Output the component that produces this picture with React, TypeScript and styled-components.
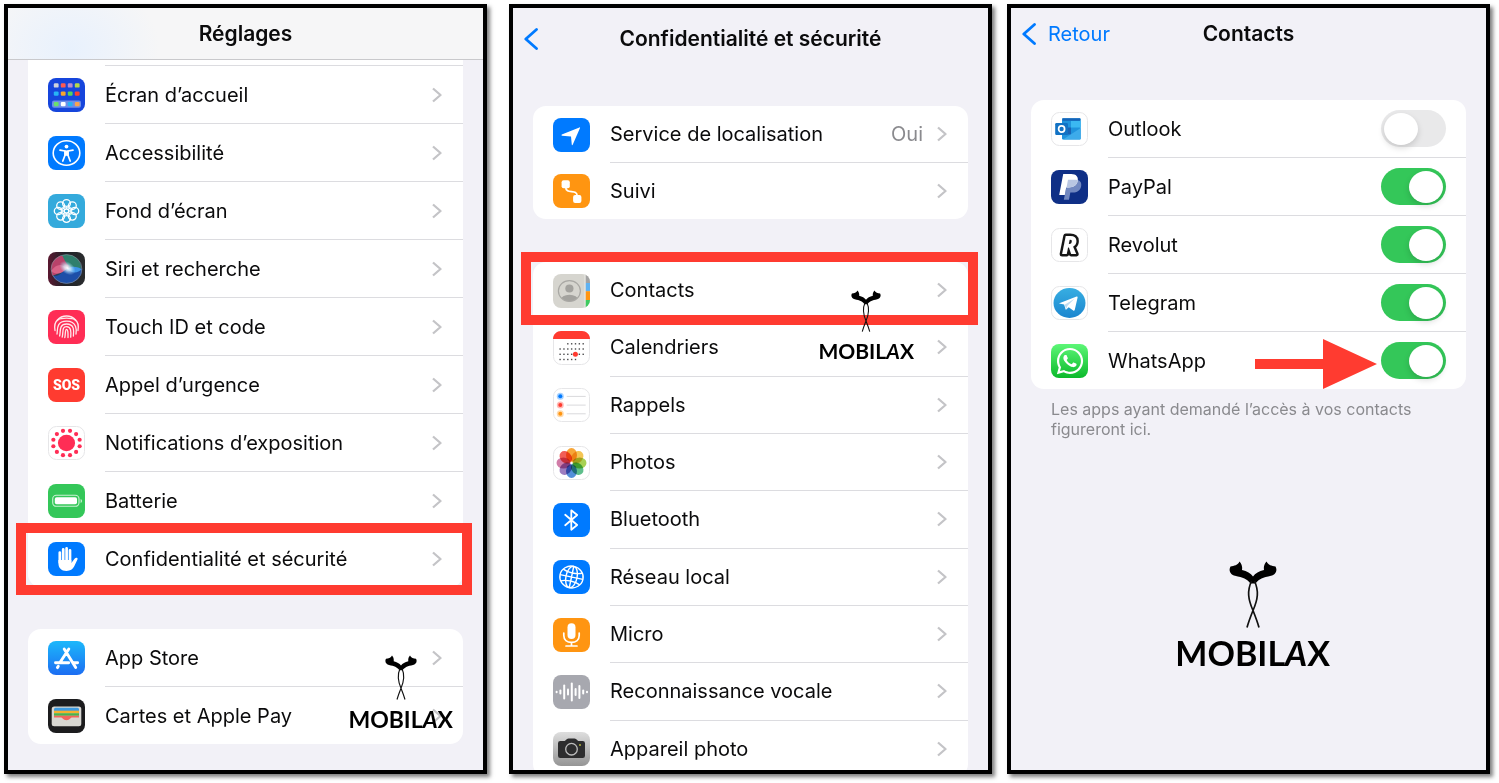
import React from "react";
import styled, { createGlobalStyle } from "styled-components";
import { FaWhatsapp } from "react-icons/fa";

const GlobalStyle = createGlobalStyle`
  *, *::before, *::after { box-sizing: border-box; }
  body {
    margin: 0;
    background: #fff;
    color: #0b0b0c;
    font-family: Inter, "Liberation Sans", sans-serif;
  }
`;

const Page = styled.main`
  display: flex;
  padding: 4px 9px 9px 4px;
`;

const Screen = styled.section<{ $gap?: number }>`
  position: relative;
  flex: 1 1 0;
  min-width: 0;
  height: calc(100vh - 13px);
  min-height: 600px;
  margin-left: ${(p) => p.$gap ?? 0}px;
  display: flex;
  flex-direction: column;
  overflow: hidden;
  background: #f2f1f7;
  border: 4px solid #000;
  box-shadow: 3px 3px 4px rgba(0, 0, 0, 0.5);
`;

const Header = styled.header<{ $height: number; $bar?: boolean }>`
  flex: none;
  height: ${(p) => p.$height}px;
  padding: 0 11px;
  display: grid;
  grid-template-columns: 1fr auto 1fr;
  align-items: center;
  border-bottom: ${(p) => (p.$bar ? "1px solid #c9c9cc" : "0")};
  background: ${(p) =>
    p.$bar
      ? "radial-gradient(ellipse 90px 70px at 62px 40px, #e8f1fd, rgba(246, 246, 247, 0)), #f6f6f7"
      : "transparent"};
`;

const Title = styled.h1`
  grid-column: 2;
  margin: 0;
  font-size: 21px;
  line-height: 24px;
  font-weight: 600;
  white-space: nowrap;
`;

const Back = styled.button`
  justify-self: start;
  display: flex;
  align-items: center;
  gap: 12px;
  padding: 0;
  border: 0;
  background: none;
  color: #007aff;
  font: inherit;
  font-size: 20px;
  line-height: 24px;
`;

const List = styled.ul<{ $top?: number; $continued?: boolean; $bleed?: boolean }>`
  flex: ${(p) => (p.$bleed ? "1 0 auto" : "none")};
  display: flex;
  flex-direction: column;
  margin: ${(p) => p.$top ?? 0}px 20px ${(p) => (p.$bleed ? -7 : 0)}px;
  padding: 0;
  list-style: none;
  background: #fff;
  border-radius: ${(p) => (p.$continued ? "0 0 13px 13px" : "13px")};
`;

const PreviousRowEnd = styled.li`
  height: 6px;
  margin-left: 77px;
  border-bottom: 1px solid #dcdce0;
`;

const Item = styled.li<{ $height: number; $grow?: boolean }>`
  position: relative;
  display: flex;
  flex: ${(p) => (p.$grow ? 1 : 0)} 0 ${(p) => p.$height}px;
  &:last-child {
    flex-basis: ${(p) => p.$height - 1}px;
  }
`;

const rowLayout = `
  flex: 1;
  display: flex;
  align-items: stretch;
  gap: 20px;
  padding-left: 20px;
  color: inherit;
  text-decoration: none;
`;
const RowLink = styled.a`${rowLayout}`;
const RowLabel = styled.label`${rowLayout}`;

const IconBox = styled.span`
  flex: none;
  width: 37px;
  display: flex;
  align-items: center;
`;

const RowBody = styled.span<{ $end: number }>`
  flex: 1;
  display: flex;
  align-items: center;
  justify-content: space-between;
  padding-right: ${(p) => p.$end}px;
  font-size: 20px;
  line-height: 24px;
  white-space: nowrap;
  border-bottom: 1px solid #dcdce0;
  li:last-child & {
    border-bottom: 0;
  }
`;

const Trailing = styled.span`
  display: flex;
  align-items: center;
  gap: 14px;
  color: #8a8a8e;
`;

const Highlight = styled.span<{ $edges: string }>`
  position: absolute;
  inset: ${(p) => p.$edges};
  z-index: 1;
  border: 10px solid #ff3b30;
  pointer-events: none;
`;

const Toggle = styled.input`
  appearance: none;
  flex: none;
  width: 65px;
  height: 37px;
  margin: 0;
  padding: 2px 3px;
  display: flex;
  align-items: center;
  border-radius: 19px;
  background: #e9e9ea;
  &::before {
    content: "";
    width: 34px;
    height: 32px;
    border-radius: 50%;
    background: #fff;
    box-shadow: 0 3px 6px rgba(0, 0, 0, 0.15);
  }
  &:checked {
    justify-content: flex-end;
    background: #34c759;
  }
`;

const Pointer = styled.svg`
  position: absolute;
  right: 89px;
  top: 7px;
`;

const Note = styled.p`
  margin: 10px 40px 0;
  font-size: 16px;
  line-height: 20px;
  color: #8a8a8e;
`;

const Mark = styled.div<{ $right: number; $bottom: number; $font: number }>`
  position: absolute;
  z-index: 2;
  right: ${(p) => p.$right}px;
  bottom: ${(p) => p.$bottom}px;
  display: flex;
  flex-direction: column;
  align-items: center;
  gap: 8px;
  color: #000;
  font-family: Lato, "Liberation Sans", sans-serif;
  font-weight: 700;
  font-size: ${(p) => p.$font}px;
  line-height: 1;
  pointer-events: none;
`;

const Chevron = () => (
  <svg width="10" height="16" viewBox="0 0 10 16" fill="none" stroke="#c4c4c7" strokeWidth="2.3" aria-hidden="true">
    <path d="M1 1.5 8.5 8 1 14.5" strokeLinejoin="round" />
  </svg>
);

const BackChevron = () => (
  <svg width="14" height="22" viewBox="0 0 14 22" fill="none" stroke="#007aff" strokeWidth="2.8" strokeLinecap="round" strokeLinejoin="round" aria-hidden="true">
    <path d="M12.5 1.5 1.8 11l10.7 9.5" />
  </svg>
);

const Tile = ({ fill, outlined, children }: { fill: string; outlined?: boolean; children?: React.ReactNode }) => (
  <svg width="37" height="34" viewBox="0 0 37 34" aria-hidden="true">
    <rect
      x={outlined ? 0.5 : 0}
      y={outlined ? 0.5 : 0}
      width={outlined ? 36 : 37}
      height={outlined ? 33 : 34}
      rx="8"
      fill={fill}
      stroke={outlined ? "#e6e6e8" : "none"}
    />
    {children}
  </svg>
);

const around = (n: number, rx: number, ry: number, phase = 0) =>
  Array.from({ length: n }, (_, i) => {
    const a = ((i + phase) * 2 * Math.PI) / n;
    return [18.5 + rx * Math.cos(a), 17 + ry * Math.sin(a)];
  });

const HomeIcon = () => {
  const colors = [
    ["#cfd3dc", "#ff5a52", "#b98ad0", "#b6d84a"],
    ["#27b4f5", "#f8a52c", "#56d35c", "#ff4030"],
    ["#6be06b", "#ffffff", "#27b4f5", "#f8a352"],
  ];
  return (
    <Tile fill="#1645dc">
      <rect x="4" y="22.5" width="29" height="7.2" rx="2" fill="#6d8eea" />
      {colors.map((row, r) =>
        row.map((c, i) => <rect key={c + i} x={5.8 + i * 7} y={[5.2, 13.4, 23.9][r]} width="4.8" height="4.4" rx="1.2" fill={c} />)
      )}
    </Tile>
  );
};

const AccessibilityIcon = () => (
  <Tile fill="#007aff">
    <ellipse cx="18.5" cy="17" rx="13.3" ry="12.3" fill="none" stroke="#fff" strokeWidth="1.6" />
    <circle cx="18.5" cy="10.6" r="1.9" fill="#fff" />
    <path d="M12 14.2 17 15v4.2L14.8 25M25 14.2 20 15v4.2l2.2 5.8" fill="none" stroke="#fff" strokeWidth="1.7" strokeLinecap="round" strokeLinejoin="round" />
    <path d="M16.3 14.4h4.4v5.4h-4.4z" fill="#fff" />
  </Tile>
);

const WallpaperIcon = () => (
  <Tile fill="#34aadc">
    <g fill="none" stroke="#fff" strokeWidth="1.3">
      {around(8, 8.3, 7.6).map(([x, y], i) => (
        <ellipse key={i} cx={x} cy={y} rx="3.9" ry="3.7" />
      ))}
      {around(8, 4, 3.7, 0.5).map(([x, y], i) => (
        <circle key={i} cx={x} cy={y} r="2" strokeWidth="0.7" />
      ))}
      <circle cx="18.5" cy="17" r="2.2" />
    </g>
  </Tile>
);

const SiriIcon = () => (
  <Tile fill="url(#siriBg)">
    <defs>
      <linearGradient id="siriBg"><stop offset="0" stopColor="#5a1830" /><stop offset=".45" stopColor="#1f2228" /><stop offset="1" stopColor="#2a2c2e" /></linearGradient>
      <radialGradient id="siriGlow"><stop offset="0" stopColor="#fff" /><stop offset=".4" stopColor="#dff4ff" stopOpacity=".75" /><stop offset="1" stopColor="#9fd8ff" stopOpacity="0" /></radialGradient>
      <clipPath id="siriClip"><ellipse cx="18.5" cy="17" rx="15.6" ry="14.6" /></clipPath>
    </defs>
    <g clipPath="url(#siriClip)">
      <rect width="37" height="34" fill="#23415c" />
      <path d="M2 4h14c6 4 6 9 3 14L4 24z" fill="#b8426a" />
      <path d="M13 1c9 0 20 4 20 15-6 3-12 0-16-7z" fill="#2f7f6c" />
      <path d="M3 23c8 4 12-5 16-6 6 3 12 2 16-1 1 12-6 17-16 17S4 30 3 23z" fill="#1d4fa8" />
      <path d="M19 17c5-4 11-2 15 0-4 4-10 5-15 0z" fill="#3d94e6" />
      <path d="M3 19c5-7 10-8 16-3-4 5-10 8-16 3z" fill="#e06c90" opacity=".8" />
      <ellipse cx="19.5" cy="16" rx="9" ry="6" fill="url(#siriGlow)" transform="rotate(35 19.5 16)" />
    </g>
    <ellipse cx="18.5" cy="17" rx="15.4" ry="14.4" fill="none" stroke="#8d8f98" strokeOpacity=".6" />
  </Tile>
);

const TouchIdIcon = () => (
  <Tile fill="#ff2d55">
    <g fill="none" stroke="#ffe9ec" strokeWidth="1.3" strokeLinecap="round">
      <path d="M9.2 10.2c5-5.6 13.6-5.6 18.6 0" />
      <path d="M7 20.5C5 8.5 13 8.2 18.5 8.2S32 8.5 30 20.5" />
      <path d="M9 24c.8-3-1.5-12.8 9.5-12.8S28.5 21 28 24" />
      <path d="M11.6 26c1.4-4-1.2-12 6.9-12s7.5 7 6.900 12" />
      <path d="M14.2 27.2c1.3-5-.5-10.6 4.3-10.6s4.6 5 4.2 10.6" />
      <path d="M16.8 27.6c.8-3 .2-8.2 1.7-8.2s1.6 3 1.5 8.2" />
    </g>
  </Tile>
);

const SosText = styled.text`
  font-family: Roboto, sans-serif;
  font-size: 14px;
  font-weight: 900;
`;

const SosIcon = () => (
  <Tile fill="#ff3b30">
    <SosText x="18.5" y="22" textAnchor="middle" fill="#fff">SOS</SosText>
  </Tile>
);

const ExposureIcon = () => (
  <Tile fill="#fff" outlined>
    <ellipse cx="18.5" cy="17" rx="8.6" ry="8.2" fill="#ff2d55" />
    {around(12, 13.6, 12.6, 0.5).map(([x, y], i) => (
      <circle key={i} cx={x} cy={y} r="2.1" fill="#ff2d55" />
    ))}
  </Tile>
);

const BatteryIcon = () => (
  <Tile fill="#34c759">
    <rect x="4.7" y="11.3" width="26.3" height="11" rx="3.6" fill="none" stroke="#c9f2d3" strokeWidth="1.1" />
    <rect x="6.8" y="13.3" width="22.2" height="7" rx="1.8" fill="#fff" />
    <path d="M32.6 15c1.9.8 1.9 3.2 0 4z" fill="#c9f2d3" />
  </Tile>
);

const HandIcon = () => (
  <Tile fill="#007aff">
    <g stroke="#fff" strokeWidth="2.7" strokeLinecap="round">
      <path d="M11.8 10.5v10M15.2 7.3V18M18.6 6.3V18M22 8.3V20" />
    </g>
    <path d="M10.45 18h12.9v3l3.4-4.6c.9-1.2 3.5-.9 2.8.9l-3.3 7c-1.5 3-3.9 4.6-7.7 4.6-5.4 0-8.1-3-8.1-7.7z" fill="#fff" />
  </Tile>
);

const AppStoreIcon = () => (
  <Tile fill="url(#storeBg)">
    <defs><linearGradient id="storeBg" x2="0" y2="1"><stop offset="0" stopColor="#1cb8fb" /><stop offset="1" stopColor="#1c6df2" /></linearGradient></defs>
    <g stroke="#fff" strokeWidth="2.9" strokeLinecap="round" fill="none">
      <path d="M20.8 8 12.3 21M16.2 8l11.5 18.5M7.5 21.7h13.2M25.8 21.7h3.8M10.3 25.2l-.9 1.4" />
    </g>
  </Tile>
);

const WalletIcon = () => (
  <Tile fill="#1c1c1e">
    <rect x="3.7" y="7.5" width="29.6" height="19.7" rx="2.5" fill="#d8d7d2" />
    <path d="M6 10.3q0-1.5 1.5-1.5h22q1.5 0 1.5 1.5V12H6z" fill="#3f9be0" />
    <path d="M6 11.7h25v2.5H6z" fill="#f6b02d" />
    <path d="M6 14.2h25v2.6H6z" fill="#4bb34b" />
    <path d="M6 16.8h25v1.7h-7c-1.5 0-2 2.7-5.5 2.7S14.5 18.5 13 18.5H6z" fill="#f2665c" />
  </Tile>
);

const LocationIcon = () => (
  <Tile fill="#007aff">
    <path d="M8.8 16.5 26.4 9.4q.9-.2.6.7l-7.3 16.7q-.6.9-.9-.1l-.8-8.1-8.9-.9q-1.3-.5-.3-1.2z" fill="#fff" />
  </Tile>
);

const TrackingIcon = () => (
  <Tile fill="#ff9511">
    <rect x="8.6" y="6.3" width="8.2" height="7.9" rx="2" fill="#fff" />
    <rect x="20.1" y="21" width="8.3" height="7.9" rx="2" fill="#fff" />
    <path d="M12.7 13c0 8 11.5 1.5 11.5 9" fill="none" stroke="#fff" strokeWidth="1.7" />
  </Tile>
);

const ContactsIcon = () => (
  <Tile fill="#d6d5cf">
    <defs><clipPath id="contactTile"><rect width="37" height="34" rx="8" /></clipPath><clipPath id="contactHead"><ellipse cx="16.4" cy="17" rx="11" ry="10.4" /></clipPath></defs>
    <g clipPath="url(#contactTile)">
      <path d="M32.5 0H37v9h-4.5z" fill="#a3a3a3" />
      <path d="M32.5 9H37v8.3h-4.5z" fill="#5eb2f2" />
      <path d="M32.5 17.3H37v8.7h-4.5z" fill="#ff9511" />
      <path d="M32.5 26H37v8h-4.5z" fill="#3ecb5f" />
      <path d="M32 0v34" stroke="#ebeae6" />
    </g>
    <g clipPath="url(#contactHead)" fill="#a3a29e">
      <circle cx="16.4" cy="14.5" r="4.1" />
      <ellipse cx="16.4" cy="26" rx="8.8" ry="5.2" />
    </g>
    <ellipse cx="16.4" cy="17" rx="11" ry="10.4" fill="none" stroke="#a9a8a4" strokeWidth="1.2" />
  </Tile>
);

const CalendarIcon = () => {
  const rows: [number, number, number][] = [[12.8, 2, 7], [18, 0, 7], [23.3, 0, 7], [28.5, 0, 5]];
  return (
    <Tile fill="#fff" outlined>
      <path d="M0 8C0 3 4 0 8 0h21c4 0 8 3 8 8z" fill="#ff3b30" />
      {rows.map(([y, from, to]) =>
        Array.from({ length: to - from }, (_, i) => (
          <rect key={`${y}-${i}`} x={6.4 + (from + i) * 3.85} y={y - 0.7} width="1.4" height="1.4" fill="#4a4a4c" />
        ))
      )}
      <circle cx="22.4" cy="23.3" r="2.5" fill="#ff3b30" />
    </Tile>
  );
};

const RemindersIcon = () => (
  <Tile fill="#fff" outlined>
    {["#007aff", "#ff3b30", "#ff9511"].map((c, i) => (
      <g key={c}>
        <circle cx="7.3" cy={8.3 + i * 8.7} r="3.5" fill={c} opacity=".35" />
        <circle cx="7.3" cy={8.3 + i * 8.7} r="2" fill={c} />
        <path d={`M13.7 ${8.4 + i * 8.7}h19`} stroke="#d9d9dc" />
      </g>
    ))}
  </Tile>
);

const Petal = styled.ellipse`
  mix-blend-mode: multiply;
`;

const PhotosIcon = () => (
  <Tile fill="#fff" outlined>
    {["#f79a1c", "#f3bd3c", "#9ccb3b", "#47b57b", "#3b7fd4", "#8f6bb8", "#cb6a9c", "#f0473f"].map((c, i) => (
      <Petal key={c} cx="18.5" cy="8.9" rx="5.5" ry="6.9" fill={c} opacity=".88" transform={`rotate(${i * 45} 18.5 17)`} />
    ))}
  </Tile>
);

const BluetoothIcon = () => (
  <Tile fill="#007aff">
    <path d="M12.2 11.8 24.2 22l-5.9 4.7V7.3l5.9 4.7-12 10.2" fill="none" stroke="#fff" strokeWidth="1.8" strokeLinejoin="round" strokeLinecap="round" />
  </Tile>
);

const NetworkIcon = () => (
  <Tile fill="#007aff">
    <g fill="none" stroke="#fff" strokeWidth="1.4" transform="rotate(12 18.5 17)">
      <ellipse cx="18.5" cy="17" rx="11.7" ry="10.9" />
      <ellipse cx="18.5" cy="17" rx="5.6" ry="10.9" />
      <path d="M18.5 6v22M6.8 17h23.4M8.8 11c5 2.5 14.4 2.5 19.4 0M8.8 23c5-2.5 14.4-2.5 19.4 0" />
    </g>
  </Tile>
);

const MicIcon = () => (
  <Tile fill="#ff9511">
    <rect x="14.5" y="5.3" width="8" height="15.7" rx="4" fill="#fff" />
    <path d="M10.8 15v2.5c0 4.2 3.2 6.9 7.7 6.9s7.7-2.7 7.7-6.9V15M18.5 24.5v3.3M13 28h11" fill="none" stroke="#fff" strokeWidth="1.7" strokeLinecap="round" />
  </Tile>
);

const SpeechIcon = () => (
  <Tile fill="#a7a8af">
    <g stroke="#fff" strokeWidth="2" strokeLinecap="round">
      {[0.5, 3, 13, 5, 17, 6, 12, 3, 0.5].map((h, i) => (
        <path key={i} d={`M${3.6 + i * 3.8} ${17 - h / 2}v${h}`} />
      ))}
    </g>
  </Tile>
);

const CameraIcon = () => (
  <Tile fill="url(#cameraBg)">
    <defs><linearGradient id="cameraBg" x2="0" y2="1"><stop offset="0" stopColor="#dedede" /><stop offset="1" stopColor="#959595" /></linearGradient></defs>
    <path d="M7.3 9h4.5l2.2-2q.7-.6 1.5-.6h6q.8 0 1.5.6l2.2 2h4.5q2.3 0 2.3 2.2v12.5q0 2.2-2.3 2.2H7.3Q5 25.9 5 23.7V11.2Q5 9 7.3 9z" fill="#2d2d2e" />
    <circle cx="18.5" cy="17.2" r="5.8" fill="none" stroke="#bdbdbd" strokeWidth="1.3" />
    <rect x="26" y="12" width="2" height="2" rx=".8" fill="#a8a83a" />
  </Tile>
);

const OutlookIcon = () => (
  <Tile fill="#fff" outlined>
    <rect x="11" y="6.3" width="18.7" height="21.3" rx="1" fill="#1f93dd" />
    <path d="M11.5 6.3h17.7v2.5H11.5z" fill="#1664b8" />
    <path d="M20 9h9.7v6.5H20z" fill="#3bb8f2" />
    <path d="M12 15.5h8v7h-8z" fill="#1a63b5" />
    <path d="M29.7 16v10.6q0 1-1 1H12z" fill="#3dabea" />
    <rect x="4.2" y="11" width="12.8" height="12" rx="1.2" fill="#1272c4" />
    <ellipse cx="10.6" cy="17" rx="3" ry="3.1" fill="none" stroke="#fff" strokeWidth="1.7" />
  </Tile>
);

const PayPalIcon = () => (
  <Tile fill="#0f2f86">
    <path d="M17 9.8h7.5c4.5 0 6.5 2.8 5.6 6.7-1 4.3-4 6-8.3 6h-2.5l-1.3 7.3h-5.2z" fill="#7288c0" />
    <path d="M12.2 4h8c5 0 7.3 2.9 6.5 6.8-.9 4.7-4.2 6.6-9 6.6h-2.5L13.800 25H8.2z" fill="#fff" />
    <path d="M17 9.8h7.5q1.2 0 2.2.3v.7c-.9 4.7-4.2 6.6-9 6.6h-2.2z" fill="#b9c6e2" />
  </Tile>
);

const RevolutText = styled.text`
  font-family: "Open Sans", sans-serif;
  font-size: 24px;
  font-weight: 800;
  font-style: italic;
`;

const RevolutIcon = () => (
  <Tile fill="#fff" outlined>
    <RevolutText x="18.5" y="25.5" textAnchor="middle" fill="#fff" stroke="#161616" strokeWidth="5" strokeLinejoin="round" paintOrder="stroke">R</RevolutText>
  </Tile>
);

const TelegramIcon = () => (
  <Tile fill="#fff" outlined>
    <defs><linearGradient id="telegramBg" x2="0" y2="1"><stop offset="0" stopColor="#37aee2" /><stop offset="1" stopColor="#1c86cf" /></linearGradient></defs>
    <ellipse cx="18.5" cy="17" rx="16" ry="15" fill="url(#telegramBg)" />
    <path d="M8.3 17.2 25.6 10.5q1.2-.3 1 .9l-2.8 12.4q-.5 1.3-1.6.6L17.7 21.2 15.3 23.5q-.6.4-.8-.4l-1.4-4.5-4.7-1q-.6-.3-.1-.4z" fill="#fff" />
    <path d="M13.6 18.7 23.5 12.8 16.5 19.8 15.2 23z" fill="#bfdcf0" />
  </Tile>
);

const WhatsAppIcon = () => (
  <Tile fill="url(#waBg)">
    <defs><linearGradient id="waBg" x2="0" y2="1"><stop offset="0" stopColor="#5df777" /><stop offset="1" stopColor="#0bb92b" /></linearGradient></defs>
    <FaWhatsapp x={4} y={2} size={30} color="#fff" />
  </Tile>
);

const Arrow = () => (
  <Pointer width="122" height="50" viewBox="0 0 122 50" aria-hidden="true">
    <path d="M0 20h68V0l54 25-54 25V30H0z" fill="#ff3b30" />
  </Pointer>
);

const Watermark = ({ right, bottom, font, width, height }: { right: number; bottom: number; font: number; width: number; height: number }) => (
  <Mark $right={right} $bottom={bottom} $font={font}>
    <svg width={width} height={height} viewBox="0 0 48 67" aria-hidden="true">
      <path d="M10.5.5c3 3.500 2.800 6.500 2.500 8.500 5 1.300 8.700 3.200 11 6.500 2.300-3.300 6-5.200 11-6.500-.3-2-.5-5 2.500-8.500C39 4 43 5 46.500 5.500 49 10 46 14 42 14.800 34 16.500 30 18 26.500 22.500h-5C18 18 14 16.500 6 14.800 2 14-1 10 1.500 5.500 5 5 9 4 10.500.5z" />
      <path d="M22.500 20c-4.500 10-3.500 18 1.500 29.500 2 5 4 10 6 17M25.500 20c4.500 10 3.500 18-1.500 29.500-2 5-4 10-6 17" fill="none" stroke="#111" strokeWidth="1.700" />
    </svg>
    <span>MOBIL<i>A</i>X</span>
  </Mark>
);

type Entry = { icon: () => React.JSX.Element; label: string; value?: string; highlight?: string };

const Rows = ({ items, height, grow }: { items: Entry[]; height: number; grow?: boolean }) => (
  <>
    {items.map(({ icon: Icon, label, value, highlight }) => (
      <Item key={label} $height={height} $grow={grow}>
        <RowLink href="#">
          <IconBox><Icon /></IconBox>
          <RowBody $end={21}>
            {label}
            <Trailing>{value}<Chevron /></Trailing>
          </RowBody>
        </RowLink>
        {highlight && <Highlight $edges={highlight} />}
      </Item>
    ))}
  </>
);

const settings: Entry[] = [
  { icon: HomeIcon, label: "Écran d’accueil" },
  { icon: AccessibilityIcon, label: "Accessibilité" },
  { icon: WallpaperIcon, label: "Fond d’écran" },
  { icon: SiriIcon, label: "Siri et recherche" },
  { icon: TouchIdIcon, label: "Touch ID et code" },
  { icon: SosIcon, label: "Appel d’urgence" },
  { icon: ExposureIcon, label: "Notifications d’exposition" },
  { icon: BatteryIcon, label: "Batterie" },
  { icon: HandIcon, label: "Confidentialité et sécurité", highlight: "-7px -9px -8px -12px" },
];
const stores: Entry[] = [
  { icon: AppStoreIcon, label: "App Store" },
  { icon: WalletIcon, label: "Cartes et Apple Pay" },
];
const tracking: Entry[] = [
  { icon: LocationIcon, label: "Service de localisation", value: "Oui" },
  { icon: TrackingIcon, label: "Suivi" },
];
const privacy: Entry[] = [
  { icon: ContactsIcon, label: "Contacts", highlight: "-10px -10px -6px -12px" },
  { icon: CalendarIcon, label: "Calendriers" },
  { icon: RemindersIcon, label: "Rappels" },
  { icon: PhotosIcon, label: "Photos" },
  { icon: BluetoothIcon, label: "Bluetooth" },
  { icon: NetworkIcon, label: "Réseau local" },
  { icon: MicIcon, label: "Micro" },
  { icon: SpeechIcon, label: "Reconnaissance vocale" },
  { icon: CameraIcon, label: "Appareil photo" },
];
const apps = [
  { icon: OutlookIcon, label: "Outlook", on: false },
  { icon: PayPalIcon, label: "PayPal", on: true },
  { icon: RevolutIcon, label: "Revolut", on: true },
  { icon: TelegramIcon, label: "Telegram", on: true },
  { icon: WhatsAppIcon, label: "WhatsApp", on: true, arrow: true },
];

export default function App() {
  return (
    <>
      <GlobalStyle />
      <Page>
        <Screen>
          <Header $height={52} $bar>
            <Title>Réglages</Title>
          </Header>
          <List $continued>
            <PreviousRowEnd />
            <Rows items={settings} height={58} />
          </List>
          <List $top={42}>
            <Rows items={stores} height={58} />
          </List>
          <Watermark right={30} bottom={39} font={23} width={32} height={45} />
        </Screen>

        <Screen $gap={22}>
          <Header $height={62}>
            <Back aria-label="Retour"><BackChevron /></Back>
            <Title>Confidentialité et sécurité</Title>
          </Header>
          <List $top={36}>
            <Rows items={tracking} height={57} />
          </List>
          <List $top={43} $bleed>
            <Rows items={privacy} height={57} grow />
          </List>
          <Watermark right={74} bottom={409} font={21} width={30} height={42} />
        </Screen>

        <Screen $gap={15}>
          <Header $height={52}>
            <Back><BackChevron />Retour</Back>
            <Title>Contacts</Title>
          </Header>
          <List $top={40}>
            {apps.map(({ icon: Icon, label, on, arrow }) => (
              <Item key={label} $height={58}>
                <RowLabel>
                  <IconBox><Icon /></IconBox>
                  <RowBody $end={20}>
                    {label}
                    <Toggle type="checkbox" defaultChecked={on} />
                  </RowBody>
                </RowLabel>
                {arrow && <Arrow />}
              </Item>
            ))}
          </List>
          <Note>Les apps ayant demandé l’accès à vos contacts figureront ici.</Note>
          <Watermark right={156} bottom={100} font={34} width={48} height={67} />
        </Screen>
      </Page>
    </>
  );
}
